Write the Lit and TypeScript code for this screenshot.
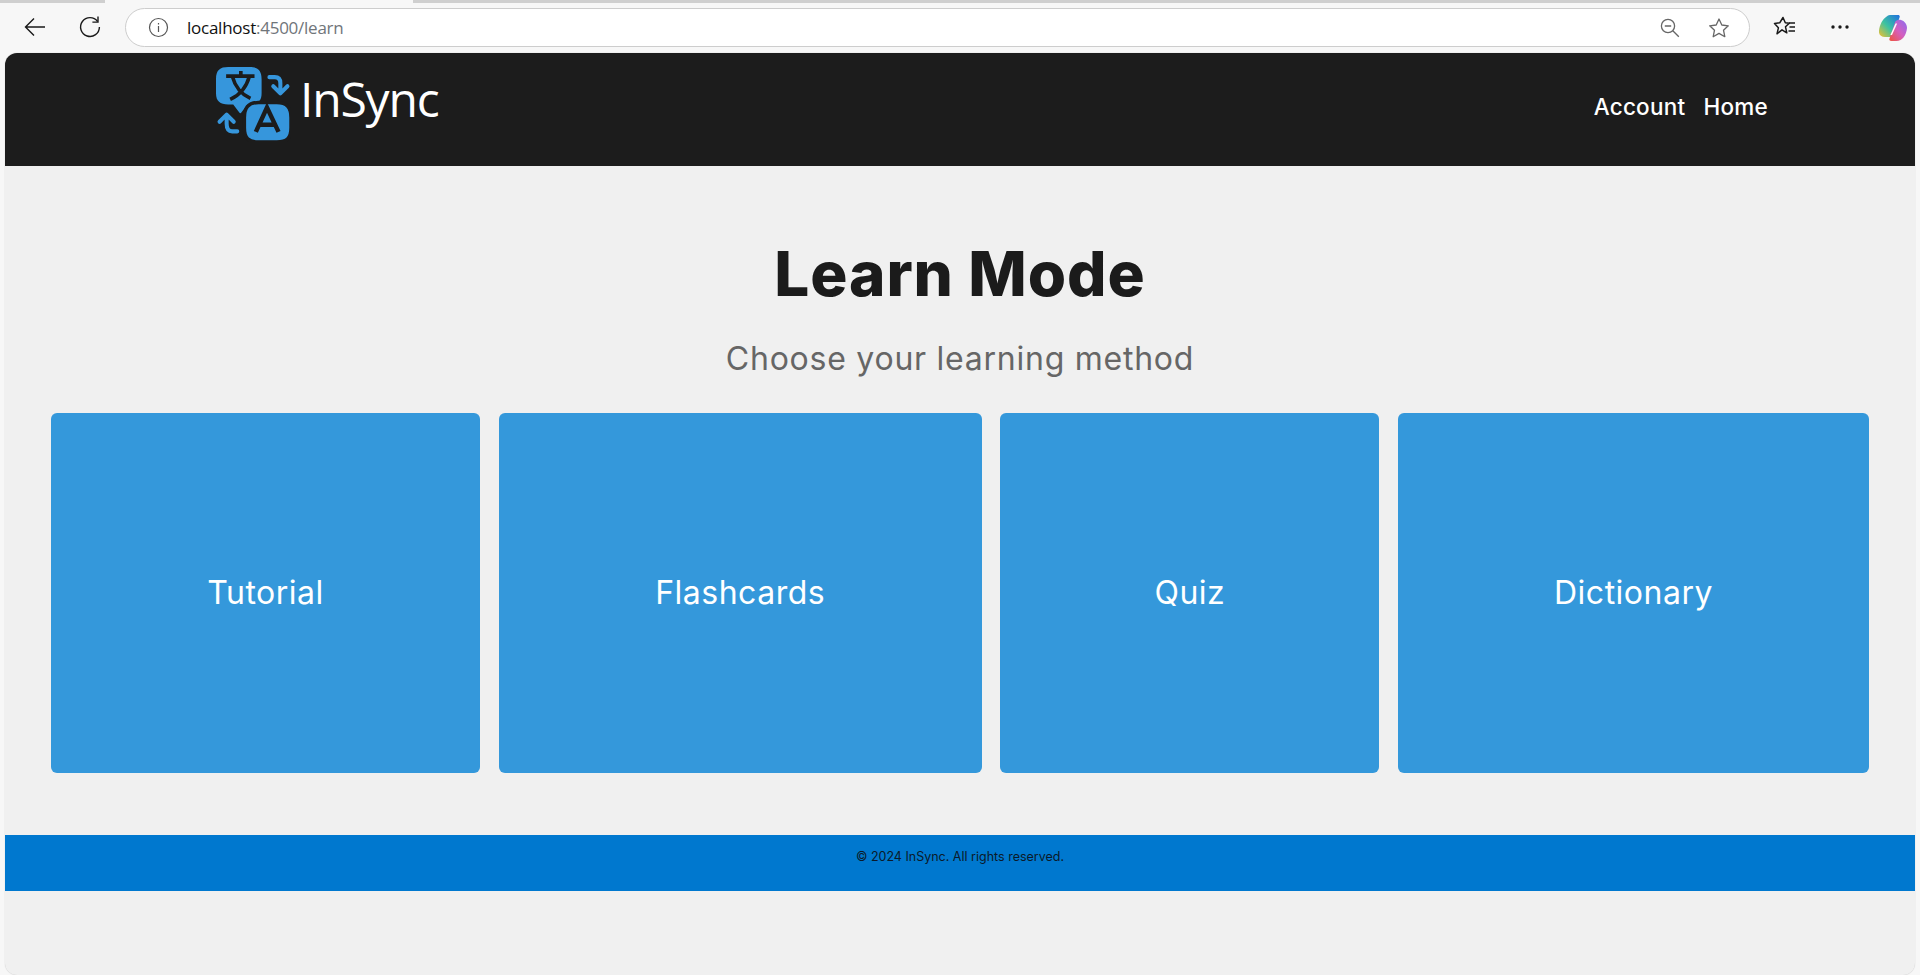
import { LitElement, html, css } from "lit";
import { customElement } from "lit/decorators.js";

const FONT = css`"Inter", "Liberation Sans", sans-serif`;

@customElement("app-root")
export class AppRoot extends LitElement {
  static styles = css`
    :host {
      display: flex;
      flex-direction: column;
      height: 975px;
      background: #f7f7f7;
      font-family: ${FONT};
      overflow: hidden;
    }
    .topline {
      height: 3px;
      flex: none;
      background: linear-gradient(to right, #cfcfcf 0 105px, #f7f7f7 105px 413px, #cfcfcf 413px);
    }
    .chrome {
      flex: none;
      height: 50px;
      display: flex;
      align-items: flex-start;
      box-sizing: border-box;
    }
    .nav-ic { width: 24px; height: 24px; display: block; flex: none; }
    .back { margin: 12px 0 0 23px; }
    .reload { margin: 12px 0 0 31px; }
    .url {
      margin: 5px 0 0 23px;
      width: 1625px;
      flex: none;
      height: 39px;
      box-sizing: border-box;
      background: #fff;
      border: 1px solid #cdcdcd;
      border-radius: 20px;
      display: flex;
      align-items: center;
      padding: 0 19px 0 22px;
      font-family: "Open Sans", sans-serif;
      font-size: 17px;
      color: #111;
    }
    .url .host { margin-left: 18px; letter-spacing: -0.25px; }
    .url .path { color: #70757a; }
    .url .spacer { flex: 1; }
    .url .star { margin-left: 28px; }
    .right-ic { margin: 12px 0 0 23px; }
    .dots { margin: 12px 0 0 31px; }
    .copilot { margin: 12px 0 0 27px; width: 28px; height: 26px; flex: none; }
    .window {
      flex: 1;
      margin: 0 5px;
      background: #f0f0f0;
      border-radius: 12px;
      box-shadow: 0 0 1px #bbb;
      overflow: hidden;
      display: flex;
      flex-direction: column;
      min-height: 0;
    }
    header {
      flex: none;
      height: 113px;
      background: #1c1c1c;
      display: flex;
      align-items: flex-start;
      justify-content: space-between;
      padding: 0 147px 0 211px;
      box-sizing: border-box;
    }
    .brand { display: flex; align-items: flex-start; margin-top: 14px; }
    .brand svg { width: 75px; height: 75px; display: block; }
    .brand span {
      color: #fff;
      font-family: "Open Sans", sans-serif;
      font-size: 48px;
      font-weight: 400;
      line-height: 64px;
      margin: 0 0 0 9px;
      letter-spacing: -1.2px;
    }
    nav { display: flex; gap: 18px; margin-top: 39px; }
    nav a {
      color: #fff;
      font-size: 22.5px;
      font-weight: 500;
      line-height: 30px;
      letter-spacing: 0.25px;
      text-decoration: none;
    }
    main {
      flex: none;
      height: 669px;
      box-sizing: border-box;
      padding: 0 46px;
      display: flex;
      flex-direction: column;
      align-items: stretch;
      text-align: center;
    }
    h1 {
      margin: 73px 0 0;
      font-size: 62px;
      line-height: 70px;
      font-weight: 800;
      color: #1b1b1b;
      letter-spacing: 0.9px;
    }
    .sub {
      margin: 28px 0 0;
      font-size: 32px;
      line-height: 44px;
      font-weight: 400;
      color: #666;
      letter-spacing: 0.75px;
    }
    .cards {
      margin-top: 32px;
      display: grid;
      grid-template-columns: 429fr 483fr 379fr 471fr;
      column-gap: 18.67px;
      height: 360px;
    }
    .card {
      background: #3498db;
      color: #fff;
      border-radius: 6px;
      display: flex;
      align-items: center;
      justify-content: center;
      padding-bottom: 2px;
      box-sizing: border-box;
      font-size: 32px;
      font-weight: 400;
      letter-spacing: 0.5px;
    }
    footer {
      flex: none;
      height: 56px;
      background: #0078cf;
      text-align: center;
      font-size: 12.5px;
      line-height: 18px;
      padding-top: 13px;
      box-sizing: border-box;
      color: #0b1a2a;
    }
  `;

  render() {
    return html`
      <div class="topline"></div>
      <div class="chrome">
        <svg class="nav-ic back" viewBox="0 0 24 24" fill="none" stroke="#1a1a1a" stroke-width="1.4"><path d="M22 12H2.5M11 3.5 2.5 12l8.500 8.500"/></svg>
        <svg class="nav-ic reload" viewBox="0 0 24 24" fill="none" stroke="#1a1a1a" stroke-width="1.4"><path d="M19.600 6.500A9.400 9.400 0 1 0 21.400 12"/><path d="M20 1.500v5.600h-5.600"/></svg>
        <div class="url">
          <svg width="21" height="21" viewBox="0 0 21 21" fill="none" stroke="#555" stroke-width="1.2"><circle cx="10.500" cy="10.500" r="9"/><path d="M10.500 9v6M10.500 6v1.500"/></svg>
          <span class="host">localhost<span class="path">:4500/learn</span></span>
          <span class="spacer"></span>
          <svg width="20" height="20" viewBox="0 0 20 20" fill="none" stroke="#666" stroke-width="1.3"><circle cx="8" cy="8" r="6.600"/><path d="M4.800 8h6.400M12.800 12.800l6 6"/></svg>
          <svg class="star" width="22" height="22" viewBox="0 0 22 22" fill="none" stroke="#666" stroke-width="1.3" stroke-linejoin="round"><path d="M11 2l2.800 6 6.500.8-4.800 4.400 1.300 6.500L11 16.400l-5.800 3.300 1.300-6.500L1.700 8.800 8.200 8z"/></svg>
        </div>
        <svg class="nav-ic right-ic" viewBox="0 0 24 24" fill="none" stroke="#1a1a1a" stroke-width="1.5" stroke-linejoin="round"><path d="M10 2.500l2.300 5.300 4 .4-3.800 3.600 1.300 6-4.800-3L4 18.800l1.400-6L1.500 8.500l5.200-.7z"/><path d="M16 8h6M16.500 12h5.500M15.500 16h6.500"/></svg>
        <svg class="nav-ic dots" viewBox="0 0 24 24" fill="#1a1a1a"><circle cx="5" cy="12" r="1.700"/><circle cx="12" cy="12" r="1.700"/><circle cx="19" cy="12" r="1.700"/></svg>
        <svg class="copilot" viewBox="0 0 28 26">
          <defs>
            <linearGradient id="cpa" x1="0" y1="1" x2="1" y2="0"><stop offset="0" stop-color="#f5c02e"/><stop offset=".45" stop-color="#3cc3a0"/><stop offset="1" stop-color="#1f6fe0"/></linearGradient>
            <linearGradient id="cpb" x1="0" y1="1" x2="1" y2="0"><stop offset="0" stop-color="#f0533a"/><stop offset=".5" stop-color="#d45fc0"/><stop offset="1" stop-color="#8a6cf0"/></linearGradient>
          </defs>
          <path fill="url(#cpa)" d="M11 0h8c1.500 0 2 1 1.600 2.300L15 19c-.6 2-2 3-4 3H6c-4 0-6.500-2-6-6.500C.8 9 4 4 7 2c1.500-1.300 2.500-2 4-2z"/>
          <path fill="url(#cpb)" d="M22 5c3.500 1 6 4 6 8-.6 7-4.500 13-10.500 13h-5c-2 0-2.500-1-2-2.500l5.500-16c.6-2 3-3 6-2.500z"/>
          <path fill="#fff" d="M16.500 8.500h1.600L13 20h-1.600z"/>
        </svg>
      </div>
      <div class="window">
        <header>
          <div class="brand">
            <svg viewBox="0 0 74 74">
              <path fill="#3696dc" d="M12 0H33C41 0 45 3 45 12V26C45 34 41 37 33 37H31L25 45C24.500 46 23.500 46 23 45L17 37H12C4 37 0 34 0 26V12C0 3 4 0 12 0Z"/>
              <path fill="none" stroke="#1c1c1c" stroke-width="3.600" d="M10 9H38M24.500 4V9M33 9C30 20 23 28 14 32M16 9C19 20 25 27 34 31"/>
              <path fill="#3696dc" stroke="#1c1c1c" stroke-width="3.400" d="M42 35H60C70 35 74 40 74 50V60C74 70 70 74 60 74H42C32 74 28 70 28 60V50C28 40 32 35 42 35Z"/>
              <path fill="none" stroke="#1c1c1c" stroke-width="4.400" d="M39.300 64 50.300 40 61.700 64M43 57H58.500"/>
              <path fill="none" stroke="#3696dc" stroke-width="4" stroke-linejoin="round" stroke-linecap="round" d="M52.700 10H58C62 10 63.500 12 63.500 16V25M56.500 19 63.500 26 70.500 19"/>
              <path fill="none" stroke="#3696dc" stroke-width="4" stroke-linejoin="round" stroke-linecap="round" d="M21 63.500H16C12 63.500 10.500 60 10.500 56V47.500M3.500 54 10.500 47 17.500 54"/>
            </svg>
            <span>InSync</span>
          </div>
          <nav><a>Account</a><a>Home</a></nav>
        </header>
        <main>
          <h1>Learn Mode</h1>
          <p class="sub">Choose your learning method</p>
          <div class="cards">
            ${["Tutorial", "Flashcards", "Quiz", "Dictionary"].map((t) => html`<div class="card">${t}</div>`)}
          </div>
        </main>
        <footer>© 2024 InSync. All rights reserved.</footer>
      </div>
    `;
  }
}
